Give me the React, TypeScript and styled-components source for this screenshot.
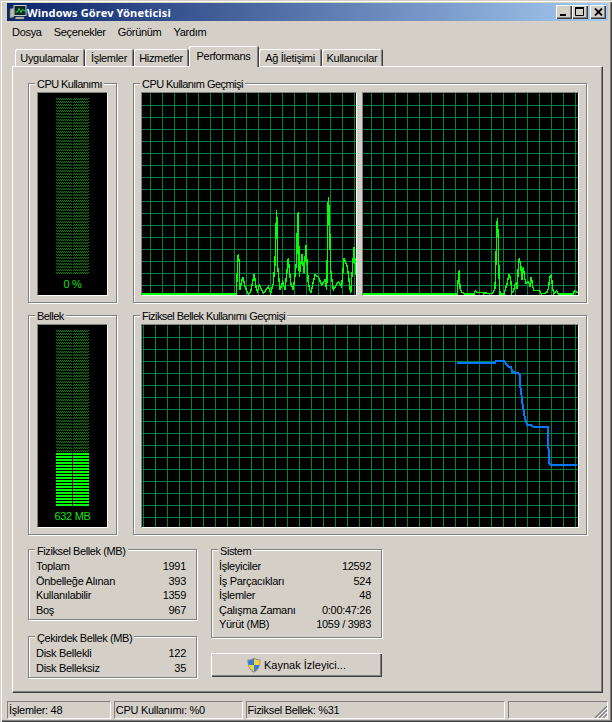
import React from "react";
import styled, { createGlobalStyle } from "styled-components";

const GlobalStyle = createGlobalStyle`
html, body {
  margin: 0;
  padding: 0;
  background: #d4d0c8;
  overflow: hidden;
}
* { box-sizing: border-box; }
`;

const Window = styled.div`
  width: 612px;
  height: 722px;
  padding: 3px 4px 0 7px;
  background: #d4d0c8;
  color: #000;
  font-family: "Liberation Sans", Arial, sans-serif;
  font-size: 11px;
  letter-spacing: -0.3px;
  box-shadow: inset 1px 1px 0 #d4d0c8, inset 2px 2px 0 #fff, inset -1px -1px 0 #404040, inset -2px -2px 0 #808080;
`;

const TitleBar = styled.div`
  height: 18px;
  display: flex;
  align-items: center;
  padding: 0 2px 0 2px;
  background: linear-gradient(to right, #0a246a, #a6caf0);
`;

const TitleText = styled.div`
  flex: 1;
  color: #fff;
  font-family: "Noto Sans", sans-serif;
  font-weight: 700;
  font-size: 11px;
  letter-spacing: 0.15px;
`;

const CaptionButton = styled.div<{ $gap?: number }>`
  width: 16px;
  height: 14px;
  margin-left: ${(p) => p.$gap ?? 0}px;
  display: flex;
  align-items: center;
  justify-content: center;
  background: #d4d0c8;
  box-shadow: inset 1px 1px 0 #fff, inset -1px -1px 0 #404040, inset -2px -2px 0 #808080;
`;

const MenuBar = styled.div`
  height: 21px;
  display: flex;
  align-items: center;
  padding-left: 5px;
  gap: 12px;
`;

const TabStrip = styled.div`
  height: 20px;
  margin: 4px 5px 0;
  padding-left: 3px;
  display: flex;
  align-items: flex-end;
  gap: 1px;
  position: relative;
  z-index: 1;
`;

const Tab = styled.div<{ $w: number; $active?: boolean }>`
  width: ${(p) => p.$w}px;
  height: ${(p) => (p.$active ? 21 : 17)}px;
  margin-bottom: ${(p) => (p.$active ? -1 : 0)}px;
  display: flex;
  align-items: center;
  justify-content: center;
  padding-bottom: ${(p) => (p.$active ? 2 : 0)}px;
  background: #d4d0c8;
  border-radius: 2px 2px 0 0;
  box-shadow: inset 1px 1px 0 #fff, inset -1px 0 0 #808080, 1px 0 0 #404040;
`;

const Panel = styled.div`
  height: 627px;
  margin: 0 5px;
  padding: 16px 15px 0 15px;
  display: flex;
  flex-direction: column;
  gap: 12px;
  border: 1px solid;
  border-color: #fff #404040 #404040 #fff;
  box-shadow: inset -1px -1px 0 #808080;
`;

const GraphRow = styled.div`
  display: flex;
  gap: 16px;
  height: 220px;
`;

const Frame = styled.div<{ $w?: number; $h?: number }>`
  position: relative;
  width: ${(p) => (p.$w ? `${p.$w}px` : "auto")};
  height: ${(p) => (p.$h ? `${p.$h}px` : "auto")};
  border: 1px solid #808080;
  box-shadow: 1px 1px 0 #fff, inset 1px 1px 0 #fff;
`;

const Legend = styled.div`
  position: absolute;
  top: -7px;
  left: 6px;
  padding: 0 2px;
  background: #d4d0c8;
  line-height: 14px;
  white-space: nowrap;
  letter-spacing: -0.55px;
`;

const StatsLegend = styled(Legend)`
  top: -6px;
  letter-spacing: -0.4px;
`;

const MeterFrame = styled(Frame)`
  padding: 8px;
`;

const HistoryFrame = styled(Frame)`
  display: flex;
  gap: 5px;
  padding: 8px 7px 0 7px;
`;

const Meter = styled.div`
  height: 204px;
  display: flex;
  flex-direction: column;
  align-items: center;
  padding-top: 5px;
  background: #000;
  border: 1px solid;
  border-color: #808080 #fff #fff #808080;
`;

const MeterValue = styled.div`
  margin-top: 2px;
  color: #14e014;
  font-size: 11px;
  line-height: 14px;
`;

const GraphBox = styled.div`
  border: 1px solid;
  border-color: #808080 #fff #fff #808080;
  height: 204px;
  background: #000;
  svg { display: block; }
`;

const StatsRow = styled.div`
  display: flex;
  gap: 14px;
  margin-top: 2px;
`;

const StatsColumn = styled.div<{ $w: number; $gap: number }>`
  width: ${(p) => p.$w}px;
  display: flex;
  flex-direction: column;
  gap: ${(p) => p.$gap}px;
`;

const StatsFrame = styled(Frame)`
  padding: 9px 10px 0 7px;
`;

const StatRow = styled.div`
  height: 14.5px;
  line-height: 14.5px;
  display: flex;
  justify-content: space-between;
`;

const ActionButton = styled.div`
  height: 24px;
  display: flex;
  align-items: center;
  justify-content: center;
  gap: 3px;
  letter-spacing: 0;
  background: #d4d0c8;
  box-shadow: inset 1px 1px 0 #fff, inset -1px -1px 0 #404040, inset -2px -2px 0 #808080;
`;

const StatusBar = styled.div`
  height: 18px;
  margin-top: 8px;
  display: flex;
  gap: 3px;
`;

const StatusPane = styled.div<{ $w: number }>`
  position: relative;
  width: ${(p) => p.$w}px;
  padding-left: 1px;
  line-height: 16px;
  border: 1px solid;
  border-color: #808080 #fff #fff #808080;
  svg { position: absolute; right: 0; bottom: 0; }
`;

type Pt = [number, number];

// points were read off 3x crops, so convert them back to page pixels
const fromCrop = (ox: number, oy: number, pts: Pt[]) =>
  pts.map(([x, y]) => `${(ox + x / 3).toFixed(1)},${(oy + y / 3).toFixed(1)}`).join(" ");

const cpu1 = fromCrop(20, 180, [
  [367, 342], [650, 342], [650, 315], [653, 250], [655, 222], [658, 250], [660, 330], [668, 290], [675, 320],
  [685, 342], [692, 335], [703, 282], [708, 320], [712, 335], [718, 315], [730, 340], [745, 320], [752, 340],
  [760, 310], [765, 250], [768, 145], [770, 90], [773, 260], [780, 330], [788, 305], [795, 330], [805, 235],
  [812, 310], [820, 330], [830, 240], [832, 145], [835, 95], [838, 290], [846, 222], [852, 280], [858, 195],
  [865, 310], [872, 340], [885, 285], [895, 290], [905, 315], [915, 300], [920, 330], [925, 50], [928, 100],
  [932, 270], [940, 330], [955, 305], [965, 320], [972, 235], [982, 260], [992, 340], [1002, 200], [1008, 285],
]);

const cpu2 = fromCrop(350, 200, [
  [40, 282], [322, 282], [322, 265], [326, 228], [328, 210], [330, 265], [336, 277], [345, 282], [372, 282],
  [376, 272], [382, 278], [400, 278], [402, 282], [405, 278], [418, 282], [430, 278], [435, 265], [437, 205],
  [440, 105], [442, 55], [445, 115], [447, 225], [450, 282], [462, 282], [470, 255], [478, 222], [482, 240],
  [486, 278], [492, 270], [494, 255], [498, 250], [502, 268], [505, 200], [508, 175], [512, 195], [516, 240],
  [520, 200], [524, 235], [528, 250], [535, 245], [540, 258], [544, 230], [548, 260], [552, 272], [568, 272],
  [574, 282], [590, 278], [595, 268], [600, 230], [604, 225], [608, 265], [612, 282], [620, 272], [625, 282],
  [670, 282], [673, 273], [684, 278],
]);

const memory = fromCrop(440, 340, [
  [52, 68], [165, 68], [168, 62], [192, 62], [200, 75], [205, 80], [213, 82], [217, 97], [235, 98], [240, 105],
  [240, 140], [244, 150], [245, 180], [250, 205], [253, 225], [258, 245], [262, 255], [272, 255], [280, 260],
  [324, 260], [325, 315], [328, 370], [332, 374], [412, 374],
]);

const range = (from: number, to: number) => {
  const out: number[] = [];
  for (let v = from; v < to; v += 12) out.push(v);
  return out;
};

const Chart = ({ left, top, width, gridX, gridY, points, color, weight }: {
  left: number; top: number; width: number; gridX: number; gridY: number; points: string; color: string; weight: number;
}) => (
  <svg width={width} height={202} viewBox={`${left} ${top} ${width} 202`} shapeRendering="crispEdges">
    {range(gridX, left + width).map((x) => (
      <line key={`x${x}`} x1={x + 0.5} x2={x + 0.5} y1={top} y2={top + 202} stroke="#008040" />
    ))}
    {range(gridY, top + 202).map((y) => (
      <line key={`y${y}`} x1={left} x2={left + width} y1={y + 0.5} y2={y + 0.5} stroke="#008040" />
    ))}
    <polyline points={points} fill="none" stroke={color} strokeWidth={weight} />
  </svg>
);

const LedBar = ({ id, lit }: { id: string; lit: number }) => (
  <svg width={34} height={177} shapeRendering="crispEdges">
    <defs>
      <pattern id={`${id}-off`} width={2} height={3} patternUnits="userSpaceOnUse">
        <rect x={0} y={0} width={1} height={1} fill="#009000" />
        <rect x={1} y={1} width={1} height={1} fill="#009000" />
      </pattern>
      <pattern id={`${id}-on`} width={2} height={3} patternUnits="userSpaceOnUse">
        <rect x={0} y={0} width={2} height={2} fill="#00ff00" />
      </pattern>
    </defs>
    {[0, 17].map((x) => (
      <g key={x}>
        <rect x={x} y={0} width={16} height={177 - lit} fill={`url(#${id}-off)`} />
        <rect x={x} y={177 - lit} width={16} height={lit} fill={`url(#${id}-on)`} />
      </g>
    ))}
  </svg>
);

const AppIcon = () => (
  <svg width={18} height={16} viewBox="0 0 18 16">
    <path d="M1 5 L5 4 V13 L1 14 Z" fill="#b8b8b0" stroke="#6c6c68" strokeWidth={0.6} />
    <rect x={5} y={1.5} width={12} height={10} fill="#0e2a28" stroke="#c8ccc8" />
    <path d="M6.5 8 L8.5 8 L10 4.5 L12 8.5 L13.5 5.5 L16 7" fill="none" stroke="#26e040" strokeWidth={1} />
    <path d="M7 13 H15 V15 H6 Z" fill="#c4c4bc" stroke="#6c6c68" strokeWidth={0.5} />
  </svg>
);

const Shield = () => (
  <svg width={14} height={16} viewBox="0 0 14 16">
    <path d="M7 0.5 C9 2 11 2.5 13.5 2.5 C13.8 8 12 13 7 15.5 C2 13 0.2 8 0.5 2.5 C3 2.5 5 2 7 0.5 Z" fill="#8f8f8f" />
    <path d="M7 1.8 V8 H1.6 C1.4 6.5 1.4 5 1.4 3.4 C3.5 3.3 5.3 2.9 7 1.8 Z" fill="#2f7fd8" />
    <path d="M7 1.8 C8.7 2.9 10.5 3.3 12.6 3.4 C12.6 5 12.6 6.5 12.4 8 H7 Z" fill="#f7d23c" />
    <path d="M1.6 8 H7 V14.2 C4 12.6 2.2 10.6 1.6 8 Z" fill="#f7d23c" />
    <path d="M7 8 H12.4 C11.8 10.6 10 12.6 7 14.2 Z" fill="#2f7fd8" />
  </svg>
);

const Grip = () => (
  <svg width={12} height={12} viewBox="0 0 12 12">
    <path d="M12 0 L0 12 M12 4 L4 12 M12 8 L8 12" stroke="#808080" strokeWidth={1.4} />
    <path d="M12 2 L2 12 M12 6 L6 12 M12 10 L10 12" stroke="#fff" strokeWidth={1} />
  </svg>
);

const tabs = [
  { label: "Uygulamalar", w: 69 },
  { label: "İşlemler", w: 48 },
  { label: "Hizmetler", w: 54 },
  { label: "Performans", w: 69, active: true },
  { label: "Ağ İletişimi", w: 62 },
  { label: "Kullanıcılar", w: 60 },
];

const physical = [["Toplam", "1991"], ["Önbelleğe Alınan", "393"], ["Kullanılabilir", "1359"], ["Boş", "967"]];
const kernel = [["Disk Bellekli", "122"], ["Disk Belleksiz", "35"]];
const system = [
  ["İşleyiciler", "12592"],
  ["İş Parçacıkları", "524"],
  ["İşlemler", "48"],
  ["Çalışma Zamanı", "0:00:47:26"],
  ["Yürüt (MB)", "1059 / 3983"],
];

const Stats = ({ rows }: { rows: string[][] }) => (
  <>
    {rows.map(([label, value]) => (
      <StatRow key={label}>
        <span>{label}</span>
        <span>{value}</span>
      </StatRow>
    ))}
  </>
);

const App = () => (
  <Window>
    <GlobalStyle />
    <TitleBar>
      <AppIcon />
      <TitleText>Windows Görev Yöneticisi</TitleText>
      <CaptionButton>
        <svg width={8} height={8}><rect x={0} y={6} width={6} height={2} fill="#000" /></svg>
      </CaptionButton>
      <CaptionButton>
        <svg width={10} height={10}><path d="M0.5 1.5 H8.5 V8.5 H0.5 Z" fill="none" stroke="#000" /><rect width={9} height={2} fill="#000" /></svg>
      </CaptionButton>
      <CaptionButton $gap={2}>
        <svg width={9} height={8}><path d="M1 0.5 L8 7.5 M8 0.5 L1 7.5" stroke="#000" strokeWidth={1.8} /></svg>
      </CaptionButton>
    </TitleBar>
    <MenuBar>
      <span>Dosya</span>
      <span>Seçenekler</span>
      <span>Görünüm</span>
      <span>Yardım</span>
    </MenuBar>
    <TabStrip>
      {tabs.map((t) => (
        <Tab key={t.label} $w={t.w} $active={t.active}>{t.label}</Tab>
      ))}
    </TabStrip>
    <Panel>
      <GraphRow>
        <MeterFrame $w={89}>
          <Legend>CPU Kullanımı</Legend>
          <Meter>
            <LedBar id="cpu" lit={0} />
            <MeterValue>0 %</MeterValue>
          </Meter>
        </MeterFrame>
        <HistoryFrame $w={454}>
          <Legend>CPU Kullanım Geçmişi</Legend>
          <GraphBox>
            <Chart left={142} top={93} width={214} gridX={150} gridY={105} points={cpu1} color="#00ff00" weight={1.4} />
          </GraphBox>
          <GraphBox>
            <Chart left={363} top={93} width={215} gridX={371} gridY={105} points={cpu2} color="#00ff00" weight={1.4} />
          </GraphBox>
        </HistoryFrame>
      </GraphRow>
      <GraphRow>
        <MeterFrame $w={89}>
          <Legend>Bellek</Legend>
          <Meter>
            <LedBar id="mem" lit={54} />
            <MeterValue>632 MB</MeterValue>
          </Meter>
        </MeterFrame>
        <HistoryFrame $w={454}>
          <Legend>Fiziksel Bellek Kullanımı Geçmişi</Legend>
          <GraphBox>
            <Chart left={142} top={325} width={436} gridX={143} gridY={337} points={memory} color="#0078ff" weight={2} />
          </GraphBox>
        </HistoryFrame>
      </GraphRow>
      <StatsRow>
        <StatsColumn $w={169} $gap={16}>
          <StatsFrame $h={71}>
            <StatsLegend>Fiziksel Bellek (MB)</StatsLegend>
            <Stats rows={physical} />
          </StatsFrame>
          <StatsFrame $h={42}>
            <StatsLegend>Çekirdek Bellek (MB)</StatsLegend>
            <Stats rows={kernel} />
          </StatsFrame>
        </StatsColumn>
        <StatsColumn $w={171} $gap={15}>
          <StatsFrame $h={89}>
            <StatsLegend>Sistem</StatsLegend>
            <Stats rows={system} />
          </StatsFrame>
          <ActionButton>
            <Shield />
            Kaynak İzleyici...
          </ActionButton>
        </StatsColumn>
      </StatsRow>
    </Panel>
    <StatusBar>
      <StatusPane $w={104}>İşlemler: 48</StatusPane>
      <StatusPane $w={129}>CPU Kullanımı: %0</StatusPane>
      <StatusPane $w={260}>Fiziksel Bellek: %31</StatusPane>
      <StatusPane $w={100}><Grip /></StatusPane>
    </StatusBar>
  </Window>
);

export default App;
